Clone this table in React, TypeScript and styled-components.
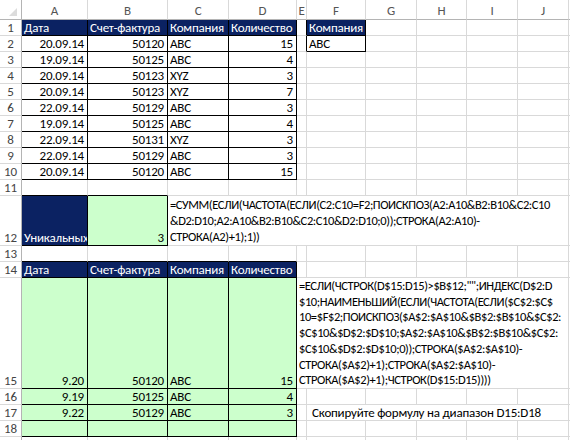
import React from "react";
import styled, { createGlobalStyle } from "styled-components";

const Global = createGlobalStyle`
  html, body { margin: 0; padding: 0; background: #ffffff; }
  body { width: 570px; height: 440px; overflow: hidden; }
`;

const BLUE = "#0b2262";
const GREEN = "#ccffcc";
const GRID = "#d9d9d9";
const HEAD_LINE = "#b4b4b4";

const COLS = [22, 66, 80, 61, 68, 10, 59, 51, 50, 51, 51, 10];
const ROWS = [20, 16, 16, 16, 16, 16, 16, 16, 16, 16, 16, 16, 50, 16, 16, 111, 16, 16, 16, 16];

const Sheet = styled.div`
  display: grid;
  grid-template-columns: ${COLS.map((c) => c + "px").join(" ")};
  grid-template-rows: ${ROWS.map((r) => r + "px").join(" ")};
  width: 570px;
  height: 440px;
  overflow: hidden;
  font-family: "Carlito", "Lato", "Liberation Sans", sans-serif;
  font-size: 13px;
  letter-spacing: -0.2px;
  color: #000;
`;

const Corner = styled.div`
  position: relative;
  border-right: 1px solid ${HEAD_LINE};
  border-bottom: 1px solid ${HEAD_LINE};
  box-sizing: border-box;
  &::after {
    content: "";
    position: absolute;
    right: 4px;
    bottom: 3px;
    width: 0;
    height: 0;
    border-left: 8px solid transparent;
    border-bottom: 8px solid #dcdcdc;
  }
`;

const ColHead = styled.div`
  box-sizing: border-box;
  border-right: 1px solid ${GRID};
  border-bottom: 1px solid ${HEAD_LINE};
  display: flex;
  align-items: center;
  justify-content: center;
  color: #555;
  font-size: 13px;
  padding-top: 1px;
`;

const RowHead = styled.div`
  box-sizing: border-box;
  border-right: 1px solid ${HEAD_LINE};
  border-bottom: 1px solid ${GRID};
  display: flex;
  align-items: flex-end;
  justify-content: center;
  color: #444;
  font-size: 13px;
  line-height: 15px;
`;

type Bg = "none" | "blue" | "green";

const Cell = styled.div<{
  $bg: Bg;
  $align: "left" | "right";
  $rb: boolean;
  $bb: boolean;
  $span: number;
}>`
  box-sizing: border-box;
  grid-column: span ${(p) => p.$span};
  background: ${(p) => (p.$bg === "blue" ? BLUE : p.$bg === "green" ? GREEN : "#fff")};
  color: ${(p) => (p.$bg === "blue" ? "#fff" : "#000")};
  border-right: 1px solid ${(p) => (p.$rb ? "#000" : GRID)};
  border-bottom: 1px solid ${(p) => (p.$bb ? "#000" : GRID)};
  display: flex;
  flex-direction: column;
  justify-content: flex-end;
  align-items: ${(p) => (p.$align === "right" ? "flex-end" : "flex-start")};
  padding: 0 3px 0 2px;
  white-space: pre;
  overflow: hidden;
  line-height: 15px;
  min-width: 0;
`;

const Formula = styled.div<{ $lh: number }>`
  line-height: ${(p) => p.$lh}px;
  white-space: pre;
  font-size: 12.5px;
  letter-spacing: -0.4px;
`;

const Note = styled.div`
  padding-left: 3px;
`;

type CellDef = {
  v?: string;
  lines?: string[];
  lh?: number;
  bg?: Bg;
  align?: "left" | "right";
  rb?: boolean;
  bb?: boolean;
  span?: number;
  note?: boolean;
};

const LETTERS = ["A", "B", "C", "D", "E", "F", "G", "H", "I", "J", ""];

const data = [
  ["20.09.14", "50120", "ABC", "15"],
  ["19.09.14", "50125", "ABC", "4"],
  ["20.09.14", "50123", "XYZ", "3"],
  ["20.09.14", "50123", "XYZ", "7"],
  ["22.09.14", "50129", "ABC", "3"],
  ["19.09.14", "50125", "ABC", "4"],
  ["22.09.14", "50131", "XYZ", "3"],
  ["22.09.14", "50129", "ABC", "3"],
  ["20.09.14", "50120", "ABC", "15"],
];

const f1 = [
  "=СУММ(ЕСЛИ(ЧАСТОТА(ЕСЛИ(C2:C10=F2;ПОИСКПОЗ(A2:A10&B2:B10&C2:C10",
  "&D2:D10;A2:A10&B2:B10&C2:C10&D2:D10;0));СТРОКА(A2:A10)-",
  "СТРОКА(A2)+1);1))",
];

const f2 = [
  "=ЕСЛИ(ЧСТРОК(D$15:D15)>$B$12;\"\";ИНДЕКС(D$2:D",
  "$10;НАИМЕНЬШИЙ(ЕСЛИ(ЧАСТОТА(ЕСЛИ($C$2:$C$",
  "10=$F$2;ПОИСКПОЗ($A$2:$A$10&$B$2:$B$10&$C$2:",
  "$C$10&$D$2:$D$10;$A$2:$A$10&$B$2:$B$10&$C$2:",
  "$C$10&$D$2:$D$10;0));СТРОКА($A$2:$A$10)-",
  "СТРОКА($A$2)+1);СТРОКА($A$2:$A$10)-",
  "СТРОКА($A$2)+1);ЧСТРОК(D$15:D15))))",
];

const blank = (n: number): CellDef[] => Array.from({ length: n }, () => ({}));

const headerCells = (labels: string[]): CellDef[] =>
  labels.map((v) => ({ v, bg: "blue" as Bg, rb: true, bb: true }));

const dataCells = (r: string[], bg: Bg = "none"): CellDef[] => [
  { v: r[0], align: "right", rb: true, bb: true, bg },
  { v: r[1], align: "right", rb: true, bb: true, bg },
  { v: r[2], rb: true, bb: true, bg },
  { v: r[3], align: "right", rb: true, bb: true, bg },
];

const HEAD = ["Дата", "Счет-фактура", "Компания", "Количество"];

const rows: CellDef[][] = [];
rows.push([
  ...headerCells(HEAD),
  { rb: true },
  { v: "Компания", bg: "blue", rb: true, bb: true },
  ...blank(5),
]);
data.forEach((r, i) => {
  rows.push([
    ...dataCells(r),
    i === 0 ? { rb: true } : {},
    i === 0 ? { v: "ABC", rb: true, bb: true } : {},
    ...blank(5),
  ]);
});
rows.push([{ bb: true }, { bb: true }, ...blank(9)]);
rows.push([
  { v: "Уникальных", bg: "blue", rb: true, bb: true },
  { v: "3", bg: "green", align: "right", rb: true, bb: true },
  { lines: f1, lh: 16, span: 8 },
  {},
]);
rows.push([{ bb: true }, { bb: true }, { bb: true }, { bb: true }, ...blank(7)]);
rows.push([...headerCells(HEAD), ...blank(7)]);
rows.push([
  ...dataCells(["9.20", "50120", "ABC", "15"], "green"),
  { lines: f2, lh: 15.7, span: 6 },
  {},
]);
rows.push([...dataCells(["9.19", "50125", "ABC", "4"], "green"), ...blank(7)]);
rows.push([
  ...dataCells(["9.22", "50129", "ABC", "3"], "green"),
  {},
  { v: "Скопируйте формулу на диапазон D15:D18", note: true, span: 5 },
  {},
]);
rows.push([...dataCells(["", "", "", ""], "green"), ...blank(7)]);
rows.push(blank(11));

export default function App() {
  return (
    <>
      <Global />
      <Sheet>
        <Corner />
        {LETTERS.map((l, i) => (
          <ColHead key={"h" + i}>{l}</ColHead>
        ))}
        {rows.map((row, ri) => (
          <React.Fragment key={"r" + ri}>
            <RowHead>{ri < 18 ? ri + 1 : ""}</RowHead>
            {row.map((c, ci) => (
              <Cell
                key={ci}
                $bg={c.bg ?? "none"}
                $align={c.align ?? "left"}
                $rb={!!c.rb}
                $bb={!!c.bb}
                $span={c.span ?? 1}
              >
                {c.lines ? (
                  <Formula $lh={c.lh ?? 16}>{c.lines.join("\n")}</Formula>
                ) : c.note ? (
                  <Note>{c.v}</Note>
                ) : (
                  c.v
                )}
              </Cell>
            ))}
          </React.Fragment>
        ))}
      </Sheet>
    </>
  );
}
